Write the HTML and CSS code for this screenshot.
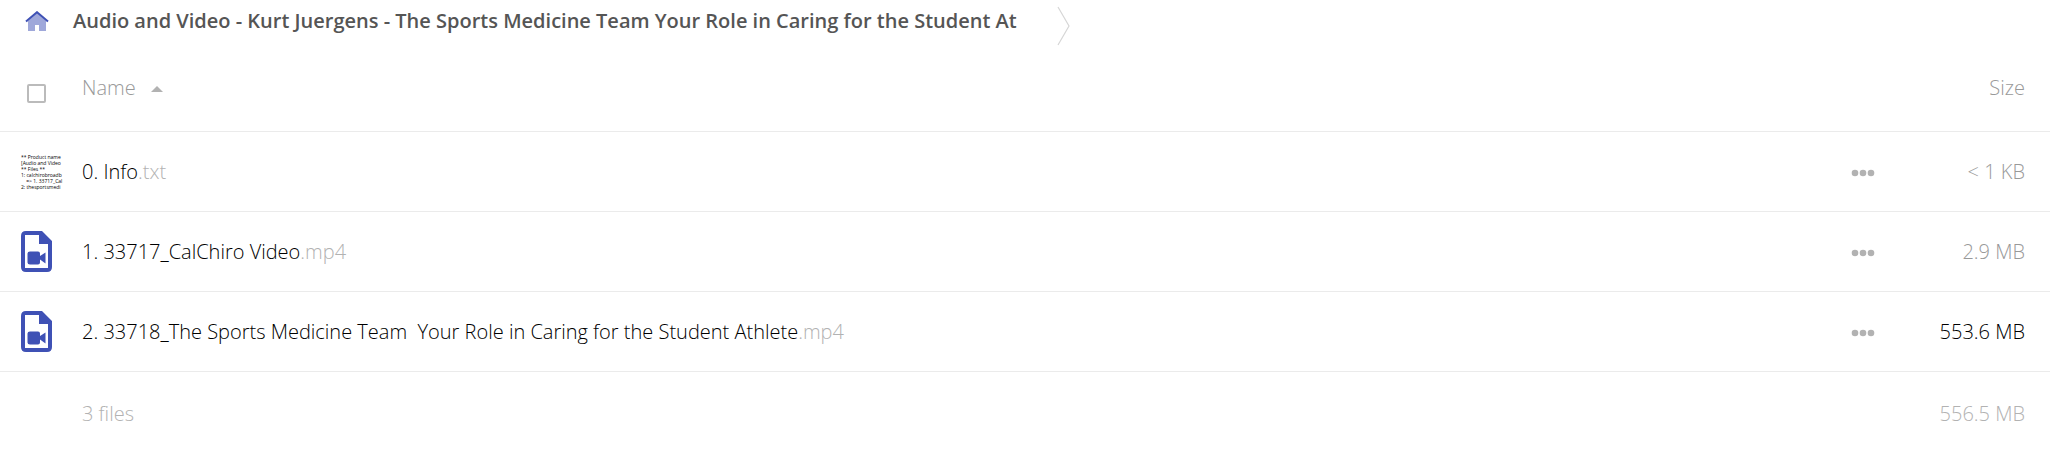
FILE: index.html
```html
<!DOCTYPE html>
<html lang="en">
<head>
  <meta charset="UTF-8" />
  <meta name="viewport" content="width=device-width, initial-scale=1.0"/>
  <title>Files</title>
  <link rel="stylesheet" href="styles.css">
</head>
<body>
  <!-- shared icons -->
  <svg class="sprite" aria-hidden="true">
    <symbol id="icon-video" viewBox="0 0 31 41">
      <path fill="#3f51b5" fill-rule="evenodd" d="M5 0H21L31 10V36Q31 41 26 41H5Q0 41 0 36V5Q0 0 5 0ZM4 4V37H27V13H18V4Z"/>
      <path fill="#3f51b5" d="M9 20.500H17Q19 20.500 19 22.500V25L24.500 21.500V32.500L19 28.500V31.500Q19 33.500 17 33.500H9Q6.500 33.500 6.500 31.500V22.500Q6.500 20.500 9 20.500Z"/>
    </symbol>
    <symbol id="icon-more" viewBox="0 0 24 8">
      <circle cx="4" cy="4" r="3.300"/>
      <circle cx="12" cy="4" r="3.300"/>
      <circle cx="20" cy="4" r="3.300"/>
    </symbol>
  </svg>

  <nav class="breadcrumb" aria-label="Breadcrumb">
    <a class="home" href="#" aria-label="Home">
      <svg width="24" height="20" viewBox="0 0 24 20">
        <path fill="#9fa8da" d="M12 2L21 10V20H14V14H10V20H3V10Z"/>
        <path fill="none" stroke="#3f51b5" stroke-width="2" d="M1 10.500L12 1.200L23 10.500"/>
      </svg>
    </a>
    <a class="crumb" href="#">Audio and Video - Kurt Juergens - The Sports Medicine Team Your Role in Caring for the Student At</a>
    <svg class="separator" width="13" height="40" viewBox="0 0 13 40">
      <path fill="none" stroke="#d6d6d6" stroke-width="1.200" d="M1 1L12 20L1 39"/>
    </svg>
  </nav>

  <table class="files">
    <thead>
      <tr>
        <th class="col-icon"><input type="checkbox" class="select-all" aria-label="Select all"></th>
        <th class="col-name"><button class="sort">Name <span class="arrow"></span></button></th>
        <th class="col-more"></th>
        <th class="col-size"><button class="sort">Size</button></th>
      </tr>
    </thead>
    <tbody>
      <tr>
        <td class="col-icon"><div class="preview">** Product name
[Audio and Video
** Files **
1: calchirobroadb
    =&gt; 1. 33717_Cal
2: thesportsmedi</div></td>
        <td class="col-name"><a href="#">0. Info<span class="ext">.txt</span></a></td>
        <td class="col-more"><button class="more" aria-label="Actions"><svg width="24" height="8"><use href="#icon-more"/></svg></button></td>
        <td class="col-size">&lt; 1 KB</td>
      </tr>
      <tr>
        <td class="col-icon"><svg class="file-icon" width="31" height="41"><use href="#icon-video"/></svg></td>
        <td class="col-name"><a href="#">1. 33717_CalChiro Video<span class="ext">.mp4</span></a></td>
        <td class="col-more"><button class="more" aria-label="Actions"><svg width="24" height="8"><use href="#icon-more"/></svg></button></td>
        <td class="col-size">2.9 MB</td>
      </tr>
      <tr>
        <td class="col-icon"><svg class="file-icon" width="31" height="41"><use href="#icon-video"/></svg></td>
        <td class="col-name"><a href="#">2. 33718_The Sports Medicine Team  Your Role in Caring for the Student Athlete<span class="ext">.mp4</span></a></td>
        <td class="col-more"><button class="more" aria-label="Actions"><svg width="24" height="8"><use href="#icon-more"/></svg></button></td>
        <td class="col-size large">553.6 MB</td>
      </tr>
    </tbody>
    <tfoot>
      <tr>
        <td class="col-icon"></td>
        <td class="col-name">3 files</td>
        <td class="col-more"></td>
        <td class="col-size">556.5 MB</td>
      </tr>
    </tfoot>
  </table>
</body>
</html>
```
FILE: styles.css
```css
* {
  box-sizing: border-box;
}

body {
  margin: 0;
  background-color: #fff;
  color: #000;
  font-family: "Open Sans", sans-serif;
  font-size: 20px;
  font-weight: 300;
}

a {
  color: inherit;
  text-decoration: none;
}

button {
  padding: 0;
  border: none;
  background: none;
  color: inherit;
  font: inherit;
  cursor: pointer;
}

svg {
  display: block;
}

.sprite {
  display: none;
}

.breadcrumb {
  display: flex;
  align-items: flex-start;
  height: 52px;
}

.home {
  padding: 11px 24px 0 25px;
}

.crumb {
  color: #555;
  font-weight: 600;
  line-height: 42px;
  white-space: nowrap;
}

.separator {
  margin: 6px 0 0 40px;
}

.files {
  width: 100%;
  border-spacing: 0;
  table-layout: fixed;
}

th, td {
  height: 80px;
  padding: 0;
  border-bottom: 1px solid #ebebeb;
  font-weight: 300;
  line-height: 28px;
  text-align: left;
}

th {
  color: #999;
}

.col-icon {
  width: 82px;
}

.col-name a {
  white-space: pre;
}

.col-more {
  width: 60px;
}

.col-size {
  width: 139px;
  padding-right: 25px;
  color: #999;
  text-align: right;
}

.col-size.large {
  color: #000;
}

th.col-name, th.col-size {
  padding-bottom: 8px;
}

.select-all {
  appearance: none;
  display: block;
  width: 19px;
  height: 19px;
  margin: 3px 0 0 27px;
  border: 2px solid #bbb;
  border-radius: 2px;
}

.arrow {
  display: inline-block;
  margin: 0 0 3px 10px;
  border: 6px solid transparent;
  border-top: none;
  border-bottom-color: #b2b2b2;
}

.ext {
  color: #b2b2b2;
}

.preview {
  margin-left: 21px;
  color: #000;
  font-size: 5px;
  font-weight: 400;
  line-height: 6px;
  white-space: pre;
}

.file-icon {
  margin-left: 21px;
}

.more {
  display: block;
  margin-top: 3px;
  fill: #b2b2b2;
}

tfoot td, tfoot .col-size {
  height: 84px;
  border: none;
  color: #b2b2b2;
}
```
